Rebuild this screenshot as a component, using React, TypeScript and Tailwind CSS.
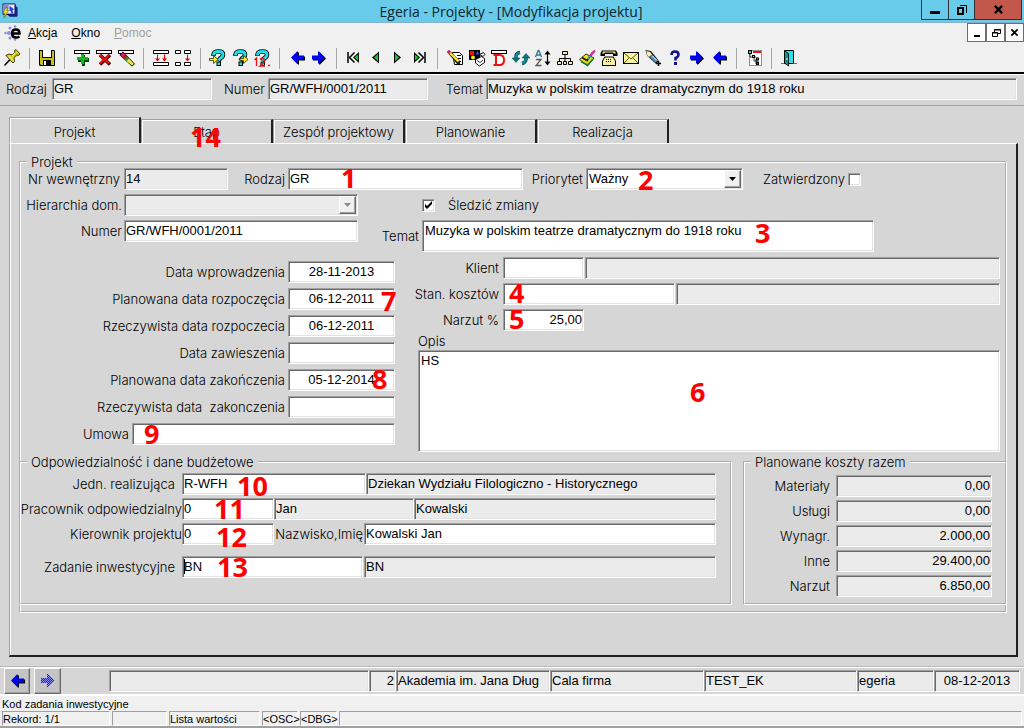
import React from "react";
import clsx from "clsx";

const sunken =
  "border border-t-[#a0a0a0] border-l-[#a0a0a0] border-b-white border-r-white shadow-[inset_1px_1px_0_#696969,inset_-1px_-1px_0_#e3e3e3]";
const raised =
  "border border-t-white border-l-white border-b-[#696969] border-r-[#696969] shadow-[inset_-1px_-1px_0_#a0a0a0]";

function Mark({ n, at }: { n: number; at: string }) {
  return (
    <span
      className={clsx(
        "pointer-events-none absolute z-10 font-['Open_Sans','Noto_Sans',sans-serif] text-[27px] leading-[20px] font-bold text-[#ff0000]",
        at,
      )}
    >
      {n}
    </span>
  );
}

type FieldProps = {
  id: string;
  label?: string;
  value?: string;
  w: string;
  ro?: boolean;
  align?: "left" | "center" | "right";
  mark?: React.ReactNode;
};

function Field({ id, label, value = "", w, ro, align = "left", mark }: FieldProps) {
  return (
    <div className={clsx("relative h-[22px]", w)}>
      <input
        id={id}
        aria-label={label}
        defaultValue={value}
        readOnly={ro}
        className={clsx(
          "block h-full w-full px-px pb-[2px] outline-none",
          sunken,
          ro ? "bg-[#ebebeb]" : "bg-white",
          align === "center" && "text-center",
          align === "right" && "text-right",
        )}
      />
      {mark}
    </div>
  );
}

function Label({ htmlFor, className, children }: { htmlFor: string; className?: string; children: React.ReactNode }) {
  return (
    <label htmlFor={htmlFor} className={clsx("shrink-0 font-['Inter',sans-serif] font-light whitespace-pre", className)}>
      {children}
    </label>
  );
}

function Check({ id, checked }: { id: string; checked?: boolean }) {
  return (
    <span className="relative flex size-[13px] shrink-0">
      <input
        id={id}
        type="checkbox"
        defaultChecked={checked}
        className={clsx("peer size-[13px] appearance-none bg-white", sunken)}
      />
      <svg viewBox="0 0 13 13" className="pointer-events-none absolute inset-0 hidden size-[13px] peer-checked:block">
        <path d="M3 5v3l2 2 5-5V2L5 7z" fill="#000" />
      </svg>
    </span>
  );
}

function Dropdown({ id, value, w, disabled, mark }: { id: string; value: string; w: string; disabled?: boolean; mark?: React.ReactNode }) {
  return (
    <div className={clsx("relative h-[22px]", w)}>
      <select
        id={id}
        disabled={disabled}
        defaultValue={value}
        className={clsx(
          "block h-full w-full appearance-none pr-5 pl-[2px] text-black outline-none",
          sunken,
          disabled ? "bg-[#ebebeb]" : "bg-white",
        )}
      >
        <option value={value}>{value}</option>
      </select>
      <span
        className={clsx(
          "pointer-events-none absolute top-[2px] right-[2px] flex h-[18px] w-[17px] items-center justify-center bg-[#f0f0f0]",
          raised,
        )}
      >
        <svg viewBox="0 0 7 4" className={clsx("h-[4px] w-[7px]", disabled ? "text-[#8c8c8c]" : "text-black")}>
          <path d="M0 0h7L3.500 4z" fill="currentColor" />
        </svg>
      </span>
      {mark}
    </div>
  );
}

function Group({ title, className, children }: { title: string; className?: string; children: React.ReactNode }) {
  return (
    <fieldset className={clsx("min-w-0 border-2 border-white pl-px [border-style:groove]", className)}>
      <legend className="ml-[5px] px-1 font-['Inter',sans-serif] leading-[12px] font-light">{title}</legend>
      {children}
    </fieldset>
  );
}

/* ---------- toolbar drawings, 18 x 18 grid ---------- */

const bar = <rect x="1.500" y="1.500" width="15" height="3" fill="#fff" stroke="#000" />;

const arrowRight = (
  <>
    <path d="M3 7.500h6V3.500h1l6 6-6 6H9v-4H3z" fill="#000" />
    <path d="M2 6.500h6V2.500h1l6 6-6 6H8v-4H2z" fill="#0000f0" />
  </>
);
const arrowLeft = (
  <>
    <path d="M17 7.500h-6V3.500h-1l-6 6 6 6h1v-4h6z" fill="#000" />
    <path d="M16 6.500h-6V2.500H9l-6 6 6 6h1v-4h6z" fill="#0000f0" />
  </>
);

const question = (
  <>
    <path d="M4.500 7V5.500Q5 2.500 9.500 2.500t4.500 3Q14 8 11 9.500L9.500 12" fill="none" stroke="#000" strokeWidth="4.500" />
    <rect x="7.500" y="12.500" width="4.500" height="4.500" fill="#000" />
    <path d="M4.500 6.500V5.500Q5 2.500 9.500 2.500t4.500 3Q14 8 11 9.500L9.500 11.500" fill="none" stroke="#20e0e8" strokeWidth="2.800" />
    <rect x="8.500" y="13.500" width="2.500" height="2.500" fill="#20e0e8" />
  </>
);

const drawings: Record<string, React.ReactNode> = {
  Przypnij: (
    <>
      <path d="M1.500 16.500 7 10.500" stroke="#000" strokeWidth="1.500" />
      <path d="M3 6.500 6 5l3 1 3-2.500-.5-2L13 .5 17 5l-1.500 1.500-2-.5L11 9l.5 3.500L10 14z" fill="#e0d820" stroke="#3c3c00" />
      <path d="M6 7.500l4.500 4.500M9 7l3-3" stroke="#fff8a0" />
      <path d="M11 8.500l4-3.500" stroke="#8c8800" strokeWidth="1.500" />
    </>
  ),
  Zapisz: (
    <>
      <path d="M1 1h15l1 1v15H2l-1-1z" fill="#000" />
      <path d="M2 2h14v14H3l-1-1z" fill="#c8c020" />
      <rect x="4" y="1" width="10" height="8" fill="#000" />
      <rect x="5" y="1" width="8" height="7" fill="#fff" />
      <rect x="5" y="11" width="8" height="6" fill="#000" />
      <rect x="6" y="12" width="2" height="4" fill="#f0f0f0" />
    </>
  ),
  Dodaj: (
    <>
      {bar}
      <path d="M9 6h3v3h4v4h-4v4H9v-4H5V9h4z" fill="#004800" />
      <path d="M8 5h3v3h4v3h-4v4H8v-4H4V8h4z" fill="#10b820" />
    </>
  ),
  "Usuń": (
    <>
      {bar}
      <path d="M5 6l10 9.500M15 6L5 15.500" stroke="#500000" strokeWidth="3.500" />
      <path d="M5 6l9 8.500M14 6l-9 8.500" stroke="#e01010" strokeWidth="2" />
    </>
  ),
  "Wyczyść": (
    <>
      {bar}
      <path d="M6 2.500L18 15l-3 2.500L2.500 6z" fill="#000" />
      <path d="M6 3.500L8.500 6 6 8.500 3.500 6z" fill="#f01080" />
      <path d="M8.500 6l1.500 1.500-2.500 2.500L6 8.500z" fill="#e01010" />
      <path d="M10 7.500l2 2L9.500 12l-2-2z" fill="#18a020" />
      <path d="M12 9.500l5 5.500-2 1.500-5.500-4.500z" fill="#f0e840" />
    </>
  ),
  "Wstaw rekord": (
    <>
      <path d="M1.500 4.500v-3h15v3zM1.500 16.500v-3h15v3z" fill="#fff" stroke="#000" />
      <path d="M5 5.500v4H3l2.500 3L8 9.500H6v-4zM12 5.500v4h-2l2.500 3 2.500-3h-2v-4z" fill="#e00000" />
    </>
  ),
  "Powiel rekord": (
    <>
      <path d="M1.500 1.500h5v3h-5zM10.500 1.500h6v3h-6zM1.500 13.500h5v3h-5zM10.500 13.500h6v3h-6z" fill="#fff" stroke="#000" />
      <path d="M13 5.500v4h-2l2.500 3 2.500-3h-2v-4z" fill="#e00000" />
    </>
  ),
  "Wprowadź zapytanie": (
    <>
      {question}
      <path d="M.5 9.500h4v-3l4.500 4-4.500 4v-3h-4z" fill="#f8f020" stroke="#302c00" strokeWidth=".8" />
    </>
  ),
  "Wykonaj zapytanie": (
    <>
      {question}
      <path d="M9 9.500h3.500v-3l4.500 4-4.500 4v-3H9z" fill="#f8f020" stroke="#302c00" strokeWidth=".8" />
    </>
  ),
  "Policz rekordy": (
    <>
      {question}
      <path d="M1.500 11l2-2v8M7 10.500q2-2.500 4 0t-4 6.500h5M15 16.500h2" stroke="#f01010" strokeWidth="1.300" fill="none" />
    </>
  ),
  "Poprzedni blok": arrowLeft,
  "Następny blok": arrowRight,
  Pierwszy: (
    <>
      <path d="M3 3v11" stroke="#000" strokeWidth="1.500" />
      <path d="M9.500 3.500L4.500 8.500l5 5" stroke="#000" fill="none" strokeWidth="1.500" />
      <path d="M14 3v11L8 8.500z" fill="#000" />
      <path d="M13 5.500v6L9.500 8.500z" fill="#10d020" />
    </>
  ),
  Poprzedni: (
    <>
      <path d="M12 2.500v12L5 8.500z" fill="#000" />
      <path d="M11 5v7L7 8.500z" fill="#10d020" />
    </>
  ),
  "Następny": (
    <>
      <path d="M5 2.500v12l7-6z" fill="#000" />
      <path d="M6 5v7l4-3.500z" fill="#10d020" />
    </>
  ),
  Ostatni: (
    <>
      <path d="M14 3v11" stroke="#000" strokeWidth="1.500" />
      <path d="M7.500 3.500l5 5-5 5" stroke="#000" fill="none" strokeWidth="1.500" />
      <path d="M3 3v11l6-5.500z" fill="#000" />
      <path d="M4 5.500v6l3.500-3z" fill="#10d020" />
    </>
  ),
  Edytuj: (
    <>
      <path d="M6.500 3.500h7l3 3v9h-8z" fill="#fff" stroke="#000" />
      <path d="M11 6.500h4M12 9.500h3M13 12.500h2" stroke="#000" />
      <path d="M1 3l2-2 11 11v3h-3z" fill="#202020" />
      <path d="M3.500 3.500L12.500 12.500" stroke="#f8e830" strokeWidth="2.200" />
      <path d="M1.500 2L4 4.500" stroke="#f02080" strokeWidth="2" />
    </>
  ),
  Obiekty: (
    <>
      <rect x="1" y="1" width="11" height="10" fill="#000" />
      <rect x="2" y="2" width="4" height="4" fill="#f01010" />
      <path d="M7.500 5.500l2-3.500 2 3.500z" fill="#3050ff" />
      <circle cx="5" cy="8.500" r="2" fill="#f0e020" />
      <path d="M11.500 5.500l4-2 1.500 2-2 2zM7.500 10.500l6-3 3 2v4l-5 3.500-4-3z" fill="#fff" stroke="#000" />
      <path d="M9 11.500l3 2 3-2.500" stroke="#000" fill="none" strokeWidth=".8" />
    </>
  ),
  Dokument: (
    <>
      <rect x="1.500" y="1.500" width="15" height="3" fill="#fff" stroke="#000" />
      <path d="M6 6h3.500Q14 6 14 11t-4.500 5H6zM3.500 6H7M3.500 16H7" fill="#fff" stroke="#f01010" strokeWidth="2" />
    </>
  ),
  "Odśwież": (
    <>
      <path d="M4 9Q3.500 4 8 3.500M14 8.500q.5 5-4 6" fill="none" stroke="#003c48" strokeWidth="3.500" />
      <path d="M4 9Q4 4 8 3.500M14 8.500q0 5-4 6" fill="none" stroke="#109098" strokeWidth="2.200" />
      <path d="M0 9h8l-4 4.500zM18 9h-8l4-4.500z" fill="#087880" stroke="#003c48" strokeWidth=".5" />
    </>
  ),
  Sortuj: (
    <>
      <path d="M1.500 8l2.700-6.500h.6L7.500 8M2.500 6h4" fill="none" stroke="#287890" strokeWidth="1.300" />
      <path d="M2 10.500h5l-5 6h5.500" fill="none" stroke="#605848" strokeWidth="1.300" />
      <path d="M13.500 3v11.500" stroke="#000" strokeWidth="1.200" />
      <path d="M10.500 5.500l3-4 3 4zM10.500 12.500l3 4 3-4z" fill="#000" />
    </>
  ),
  Struktura: (
    <>
      <path d="M9 6v6M3.500 12V9.500h11V12" fill="none" stroke="#000" />
      <path d="M6.500 2.500h5v3h-5zM1.500 12.500h4v3h-4zM7.500 12.500h3v3h-3zM12.500 12.500h4v3h-4z" fill="#f4f0b0" stroke="#000" />
    </>
  ),
  "Zatwierdź": (
    <>
      <path d="M1.500 10.500L8 5l8 4-6.500 8z" fill="#f0e020" stroke="#000" strokeWidth=".8" />
      <path d="M3 12.500l6.500 3.500L15 10" fill="none" stroke="#108020" strokeWidth="1.600" />
      <path d="M4 8.500l5 3 6-8.500" fill="none" stroke="#202020" strokeWidth="1.800" />
      <path d="M12.500 6.500L17 1.500" stroke="#e020a0" strokeWidth="2" />
      <path d="M9.500 10l3-3.500" stroke="#20b0d0" strokeWidth="1.500" />
    </>
  ),
  Telefon: (
    <>
      <path d="M2 1.500h14l1.500 2.500v3H13V5H5v2H.5V4zM4.500 7.500h9L16 12v5H2v-5z" fill="#000" />
      <path d="M3 2.500h12l1 2h-2l-1-1H5l-1 1H2zM5 8.500h8l2 3.500v4H3v-4z" fill="#f8f0a0" />
      <path d="M6 10.500h6M6 12.500h6" stroke="#000" strokeDasharray="1 1" />
    </>
  ),
  Poczta: (
    <>
      <rect x="1.500" y="3.500" width="15" height="11" fill="#f8f4a0" stroke="#000" />
      <path d="M2 4l7 6 7-6M2 14l5-5M16 14l-5-5" fill="none" stroke="#504800" strokeWidth=".9" />
    </>
  ),
  Latarka: (
    <>
      <path d="M1.500 1l5.500 1 8 10-3 3-9-8.500z" fill="#202020" />
      <path d="M2.500 2L6 3l2 2.500L5 8 3 6z" fill="#f8f0b0" />
      <path d="M7 7l5.500 5.500" stroke="#4890d0" strokeWidth="3" />
      <path d="M8 6.500l5 5" stroke="#fff" />
      <path d="M14.500 12v5M12 14.500h5" stroke="#000" strokeWidth="1.500" />
    </>
  ),
  "Pomoc programu": (
    <>
      <path d="M5.500 6Q5.500 2.500 9 2.500t3.500 3Q12.500 8 9.500 9v2.500" fill="none" stroke="#101090" strokeWidth="2.500" />
      <rect x="8" y="13" width="3" height="3" fill="#101090" />
    </>
  ),
  Dalej: arrowRight,
  Wstecz: arrowLeft,
  Drzewo: (
    <>
      <rect x="4.500" y="1.500" width="12" height="15" fill="#fff" stroke="#909090" />
      <rect x="8" y="2" width="8" height="2" fill="#f01010" />
      <path d="M5 5v3h4v4h4v3M9 8h2M11 10v5h2" fill="none" stroke="#000" strokeWidth=".8" />
      <path d="M3 1h4v4H3z" fill="#000" />
      <path d="M4 2h2v2H4z" fill="#40d080" />
      <path d="M7 6h3v3H7zM11 8.500h3v3h-3zM11 13h3v3h-3z" fill="#000" />
      <path d="M8 7h1v1H8z" fill="#f0e020" />
      <path d="M12 9.500h1v1h-1z" fill="#40d080" />
      <path d="M12 14h1v1h-1z" fill="#f01010" />
    </>
  ),
  "Wyjście": (
    <>
      <path d="M1 14.500h4M14 14.500h3" stroke="#707070" />
      <path d="M4.500 1.500h9v13h-9z" fill="#30e0e8" stroke="#000" />
      <path d="M4.500 1.500l4 3v12.500l-4-3z" fill="#109090" stroke="#000" strokeWidth=".8" />
      <path d="M7 9v2" stroke="#fff" />
    </>
  ),
};

const toolGroups: string[][] = [
  ["Przypnij"],
  ["Zapisz"],
  ["Dodaj", "Usuń", "Wyczyść"],
  ["Wstaw rekord", "Powiel rekord"],
  ["Wprowadź zapytanie", "Wykonaj zapytanie", "Policz rekordy"],
  ["Poprzedni blok", "Następny blok"],
  ["Pierwszy", "Poprzedni", "Następny", "Ostatni"],
  [
    "Edytuj", "Obiekty", "Dokument", "Odśwież", "Sortuj", "Struktura", "Zatwierdź",
    "Telefon", "Poczta", "Latarka", "Pomoc programu", "Dalej", "Wstecz",
  ],
  ["Drzewo"],
  ["Wyjście"],
];

function TitleBar() {
  return (
    <header className="flex h-[23px] items-start border-b border-[#7fb4cc] bg-[#68cbea] pr-[2px] pl-[2px]">
      <svg viewBox="0 0 17 17" className="mt-[3px] size-[16px] shrink-0">
        <path d="M1 1h13v11H1z" fill="#e8e8f8" stroke="#101060" />
        <path d="M14 3l2 2v9H8l-2-2h8z" fill="#2030a0" stroke="#101060" />
        <path d="M2 2h5v5H2z" fill="#7890d8" />
        <path d="M8 3l5 4-2 .5 1 3-2 .5-1-3-1 1z" fill="#2040e0" />
        <path d="M4 5l2 0-1 3h2l-5 8 1-5H1z" fill="#f0e020" stroke="#504000" strokeWidth=".5" />
      </svg>
      <h1 className="min-w-0 flex-1 pl-[83px] text-center font-['Open_Sans','Noto_Sans',sans-serif] text-[14px] leading-[23px] text-[#10242c]">
        Egeria - Projekty - [Modyfikacja projektu]
      </h1>
      <div className="flex h-[20px] shrink-0 border border-t-0 border-[#303030]">
        <button aria-label="Minimalizuj" className="flex w-[27px] items-center justify-center border-r border-[#303030]">
          <svg viewBox="0 0 10 10" className="size-[10px]"><path d="M0 6h10v3H0z" /></svg>
        </button>
        <button aria-label="Przywróć" className="flex w-[26px] items-center justify-center border-r border-[#303030]">
          <svg viewBox="0 0 10 10" className="size-[10px]" fill="none" stroke="#000">
            <path d="M1 3h5v6H1z" strokeWidth="2" />
            <path d="M3 .5h6.500V8" />
          </svg>
        </button>
        <button aria-label="Zamknij" className="flex w-[46px] items-center justify-center bg-[#c2574c]">
          <svg viewBox="0 0 10 10" className="size-[9px]"><path d="M1 1l8 8M9 1L1 9" stroke="#000" strokeWidth="2.500" /></svg>
        </button>
      </div>
    </header>
  );
}

const mdiButton = "flex size-[19px] items-center justify-center border border-[#6e6e6e] bg-white";

function MenuBar() {
  return (
    <nav className="flex h-[19px] items-center bg-[#f0f0f0] pl-[4px] text-[12px]">
      <svg viewBox="0 0 18 16" className="mr-[6px] h-[16px] w-[18px] shrink-0">
        <g fill="#8890d8">
          <circle cx="1.500" cy="8" r="1.300" />
          <circle cx="5" cy="8" r="2" />
          <circle cx="6" cy="3" r="1.500" />
          <circle cx="6" cy="13" r="1.500" />
          <circle cx="11" cy="1.500" r="1.300" />
          <circle cx="11" cy="14.500" r="1.300" />
        </g>
        <path d="M8.500 8.500h7q0-4-3.700-4t-3.700 4 4 4q2 0 3.200-1.200" fill="none" stroke="#000" strokeWidth="2.500" />
      </svg>
      <a href="#akcja"><u>A</u>kcja</a>
      <a href="#okno" className="ml-[14px]"><u>O</u>kno</a>
      <a href="#pomoc" className="ml-[14px] text-[#a0a0a0]"><u>P</u>omoc</a>
      <div className="ml-auto flex">
        <button aria-label="Minimalizuj dokument" className={mdiButton}>
          <svg viewBox="0 0 10 10" className="size-[10px]"><path d="M2 7h6v2H2z" /></svg>
        </button>
        <button aria-label="Przywróć dokument" className={mdiButton}>
          <svg viewBox="0 0 10 10" className="size-[10px]" fill="none" stroke="#000">
            <path d="M3.500 4V1.500h6v4H7M3 2h7M1.500 4.500h5v4h-5zM1 5h6" />
          </svg>
        </button>
        <button aria-label="Zamknij dokument" className={mdiButton}>
          <svg viewBox="0 0 10 10" className="size-[9px]"><path d="M1.500 1.500l7 7M8.500 1.500l-7 7" stroke="#000" strokeWidth="2" /></svg>
        </button>
      </div>
    </nav>
  );
}

function Toolbar() {
  return (
    <div role="toolbar" className="flex h-[32px] items-center border-b-2 border-black bg-[#f0f0f0] pt-[2px] pl-px">
      {toolGroups.map((group, i) => (
        <React.Fragment key={i}>
          {i > 0 && <span className="mx-[6px] h-[21px] w-px bg-[#a8a8a8]" />}
          {group.map((name) => (
            <button key={name} aria-label={name} className="flex h-[24px] w-[22px] shrink-0 items-center justify-center">
              <svg viewBox="0 0 18 18" className="size-[18px]">
                {drawings[name]}
              </svg>
            </button>
          ))}
        </React.Fragment>
      ))}
    </div>
  );
}

const tabs = ["Projekt", "Etap", "Zespół projektowy", "Planowanie", "Realizacja"];

function Tabs() {
  return (
    <div role="tablist" className="flex h-[25px] items-end font-['Inter',sans-serif] font-light">
      {tabs.map((name, i) => (
        <button
          key={name}
          role="tab"
          aria-selected={i === 0}
          className={clsx(
            "relative w-[132px] border-t border-r-2 border-l border-t-[#a0a0a0] border-r-[#202020] border-l-[#a0a0a0] shadow-[inset_1px_1px_0_#fff]",
            i === 0 ? "h-[26px] pt-[2px]" : "h-[24px]",
          )}
        >
          {name}
          {i === 1 && <Mark n={14} at="top-[7px] left-[48px]" />}
        </button>
      ))}
    </div>
  );
}

const dates: [string, string, string, React.ReactNode?][] = [
  ["d1", "Data wprowadzenia", "28-11-2013"],
  ["d2", "Planowana data rozpoczęcia", "06-12-2011", <Mark n={7} at="top-[3px] left-[93px]" />],
  ["d3", "Rzeczywista data rozpoczecia", "06-12-2011"],
  ["d4", "Data zawieszenia", ""],
  ["d5", "Planowana data zakończenia", "05-12-2014", <Mark n={8} at="top-0 left-[84px]" />],
  ["d6", "Rzeczywista data  zakonczenia", ""],
];

const costs: [string, string, string][] = [
  ["k1", "Materiały", "0,00"],
  ["k2", "Usługi", "0,00"],
  ["k3", "Wynagr.", "2.000,00"],
  ["k4", "Inne", "29.400,00"],
  ["k5", "Narzut", "6.850,00"],
];

function ProjectForm() {
  return (
    <Group title="Projekt">
      <div className="flex flex-col gap-1">
        <div className="flex items-center">
          <Label htmlFor="nr" className="w-[102px] pr-[4px] text-right">Nr wewnętrzny</Label>
          <Field id="nr" value="14" w="w-[104px]" ro />
          <Label htmlFor="rodzaj" className="w-[60px] pr-[3px] text-right">Rodzaj</Label>
          <Field id="rodzaj" value="GR" w="w-[235px]" mark={<Mark n={1} at="top-0 left-[53px]" />} />
          <Label htmlFor="priorytet" className="w-[63px] pr-[3px] text-right">Priorytet</Label>
          <Dropdown id="priorytet" value="Ważny" w="w-[157px]" mark={<Mark n={2} at="top-[2px] left-[52px]" />} />
          <Label htmlFor="zatw" className="w-[105px] pr-[3px] text-right">Zatwierdzony</Label>
          <Check id="zatw" />
        </div>
        <div className="flex items-center">
          <Label htmlFor="hier" className="w-[102px] pr-[2px] text-right">Hierarchia dom.</Label>
          <Dropdown id="hier" value="" w="w-[234px]" disabled />
          <span className="w-[64px]" />
          <Check id="sledz" checked />
          <Label htmlFor="sledz" className="pl-[13px]">Śledzić zmiany</Label>
        </div>
        <div className="flex items-start">
          <Label htmlFor="numer" className="w-[102px] pr-[2px] text-right leading-[22px]">Numer</Label>
          <Field id="numer" value="GR/WFH/0001/2011" w="w-[234px]" />
          <Label htmlFor="temat" className="w-[64px] pr-[3px] text-right leading-[32px]">Temat</Label>
          <div className="relative h-[32px] w-[452px]">
            <textarea
              id="temat"
              defaultValue="Muzyka w polskim teatrze dramatycznym do 1918 roku"
              className={clsx("block h-full w-full resize-none overflow-hidden bg-white px-[2px] pt-[2px] outline-none", sunken)}
            />
            <Mark n={3} at="top-[3px] left-[333px]" />
          </div>
        </div>
      </div>

      <div className="flex">
        <div className="flex w-[373px] shrink-0 flex-col gap-[5px] pt-[9px]">
          {dates.map(([id, name, value, mark]) => (
            <div key={id} className="flex items-center justify-end">
              <Label htmlFor={id} className="pr-[3px]">{name}</Label>
              <Field id={id} value={value} w="w-[107px]" align="center" mark={mark} />
            </div>
          ))}
          <div className="flex items-center justify-end">
            <Label htmlFor="umowa" className="pr-[3px]">Umowa</Label>
            <Field id="umowa" w="w-[263px]" mark={<Mark n={9} at="top-px left-[12px]" />} />
          </div>
        </div>

        <div className="flex min-w-0 flex-1 flex-col pt-[5px] pr-[5px]">
          <div className="flex flex-col gap-1">
            <div className="flex items-center">
              <Label htmlFor="klient" className="w-[108px] pr-[4px] text-right">Klient</Label>
              <Field id="klient" w="w-[81px]" />
              <Field id="klient2" label="Nazwa klienta" w="ml-px flex-1" ro />
            </div>
            <div className="flex items-center">
              <Label htmlFor="stan" className="w-[108px] pr-[4px] text-right">Stan. kosztów</Label>
              <Field id="stan" w="w-[172px]" mark={<Mark n={4} at="top-0 left-[6px]" />} />
              <Field id="stan2" label="Nazwa stanowiska" w="ml-px flex-1" ro />
            </div>
            <div className="flex items-center">
              <Label htmlFor="narzut" className="w-[108px] pr-[4px] text-right">Narzut %</Label>
              <Field id="narzut" value="25,00" w="w-[81px]" align="right" mark={<Mark n={5} at="top-0 left-[6px]" />} />
            </div>
          </div>
          <Label htmlFor="opis" className="ml-[23px] pt-[2px] leading-[17px]">Opis</Label>
          <div className="relative ml-[23px] h-[102px]">
            <textarea
              id="opis"
              defaultValue="HS"
              className={clsx("block h-full w-full resize-none bg-white px-[2px] pt-[2px] outline-none", sunken)}
            />
            <Mark n={6} at="top-[32px] left-[272px]" />
          </div>
        </div>
      </div>

      <div className="-mr-[2px] mt-1 mb-[6px] -ml-[3px] flex gap-[11px]">
        <Group title="Odpowiedzialność i dane budżetowe" className="flex-1 pr-[14px] pb-[25px]">
          <div className="flex flex-col gap-[3px] pt-[5px]">
            <div className="flex items-center">
              <Label htmlFor="jedn" className="w-[160px] pr-[7px] text-right">Jedn. realizująca</Label>
              <Field id="jedn" value="R-WFH" w="w-[184px]" mark={<Mark n={10} at="top-[3px] left-[55px]" />} />
              <Field id="jedn2" label="Nazwa jednostki" value="Dziekan Wydziału Filologiczno - Historycznego" w="flex-1" ro />
            </div>
            <div className="flex items-center">
              <Label htmlFor="prac" className="flex w-[160px] justify-end">Pracownik odpowiedzialny</Label>
              <Field id="prac" value="0" w="w-[92px]" mark={<Mark n={11} at="top-px left-[32px]" />} />
              <Field id="prac2" label="Imię pracownika" value="Jan" w="w-[140px]" ro />
              <Field id="prac3" label="Nazwisko pracownika" value="Kowalski" w="flex-1" ro />
            </div>
            <div className="flex items-center">
              <Label htmlFor="kier" className="w-[160px] text-right">Kierownik projektu</Label>
              <Field id="kier" value="0" w="w-[92px]" mark={<Mark n={12} at="top-[4px] left-[34px]" />} />
              <Label htmlFor="kier2" className="flex w-[90px] justify-end pr-px">Nazwisko,Imię</Label>
              <Field id="kier2" value="Kowalski Jan" w="flex-1" />
            </div>
            <div className="mt-[8px] flex items-center">
              <Label htmlFor="zad" className="w-[160px] pr-[7px] text-right">Zadanie inwestycyjne</Label>
              <Field
                id="zad"
                value="BN"
                w="w-[181px]"
                mark={
                  <>
                    <span className="absolute top-[3px] left-[2px] h-[15px] w-px bg-black" />
                    <Mark n={13} at="top-px left-[35px]" />
                  </>
                }
              />
              <Field id="zad2" label="Nazwa zadania" value="BN" w="ml-px flex-1" ro />
            </div>
          </div>
        </Group>
        <Group title="Planowane koszty razem" className="w-[264px] shrink-0">
          <div className="flex flex-col gap-[3px] pt-[7px] pr-[13px]">
            {costs.map(([id, name, value]) => (
              <div key={id} className="flex items-center justify-end">
                <Label htmlFor={id} className="pr-[6px]">{name}</Label>
                <Field id={id} value={value} w="w-[156px]" align="right" ro />
              </div>
            ))}
          </div>
        </Group>
      </div>
    </Group>
  );
}

function RecordBar() {
  return (
    <div className="flex items-center border-t border-white bg-[#d6d6d6] pr-1 pl-[4px] shadow-[0_-1px_0_#b8b8b8]">
      <button aria-label="Poprzedni rekord" className={clsx("flex h-[26px] w-[26px] items-center justify-center bg-[#c4c4c4]", raised)}>
        <svg viewBox="0 0 18 18" className="size-[18px]">{arrowLeft}</svg>
      </button>
      <button aria-label="Następny rekord" className={clsx("ml-[4px] flex h-[26px] w-[27px] items-center justify-center bg-[#c4c4c4]", raised)}>
        <svg viewBox="0 0 18 18" className="size-[18px]">
          <defs>
            <pattern id="dots" width="2" height="2" patternUnits="userSpaceOnUse">
              <rect width="2" height="2" fill="#9090f0" />
              <path d="M0 0h1v1H0zM1 1h1v1H1z" fill="#1818f0" />
            </pattern>
          </defs>
          <path d="M2 6h6V2h1l6.500 6.500L9 15H8v-4H2z" fill="url(#dots)" />
        </svg>
      </button>
      <div className="ml-[48px] flex min-w-0 flex-1">
        <Field id="s1" label="Komunikat" w="flex-1" ro />
        <Field id="s2" label="Numer firmy" value="2" w="w-[27px]" align="right" ro />
        <Field id="s3" label="Firma" value="Akademia im. Jana Dług" w="w-[154px]" ro />
        <Field id="s4" label="Zakres" value="Cala firma" w="w-[154px]" ro />
        <Field id="s5" label="Baza" value="TEST_EK" w="w-[153px]" ro />
        <Field id="s6" label="Użytkownik" value="egeria" w="w-[77px]" ro />
        <Field id="s7" label="Data" value="08-12-2013" w="w-[86px]" align="center" ro />
      </div>
    </div>
  );
}

const cell = "h-[15px] border border-t-[#a0a0a0] border-l-[#a0a0a0] border-r-white border-b-white whitespace-nowrap";

function StatusBar() {
  return (
    <footer className="border-t-2 border-b-2 border-t-white border-b-[#a0a0a0] bg-[#f0f0f0] px-[2px] text-[11px] leading-[14px]">
      <p className="h-[15px] pt-px">Kod zadania inwestycyjne</p>
      <div className="flex gap-[2px]">
        <span className={clsx(cell, "w-[108px]")}>Rekord: 1/1</span>
        <span className={clsx(cell, "w-[55px]")} />
        <span className={clsx(cell, "w-[91px]")}>Lista wartości</span>
        <span className={clsx(cell, "w-[36px]")}>&lt;OSC&gt;</span>
        <span className={clsx(cell, "w-[37px]")}>&lt;DBG&gt;</span>
        <span className={clsx(cell, "flex-1")} />
      </div>
    </footer>
  );
}

export default function App() {
  return (
    <div className="flex min-h-screen flex-col bg-[#d6d6d6] font-['Liberation_Sans',Arial,sans-serif] text-[13px] leading-[16px] text-black">
      <TitleBar />
      <MenuBar />
      <Toolbar />
      <div className="flex items-center border-t border-b border-t-white border-b-[#a0a0a0] pt-[3px] pr-[7px] pb-[5px] pl-[6px]">
        <Label htmlFor="h1" className="w-[46px]">Rodzaj</Label>
        <Field id="h1" value="GR" w="w-[160px]" ro />
        <Label htmlFor="h2" className="w-[56px] pr-[3px] text-right">Numer</Label>
        <Field id="h2" value="GR/WFH/0001/2011" w="w-[160px]" ro />
        <Label htmlFor="h3" className="w-[58px] pr-[3px] text-right">Temat</Label>
        <Field id="h3" value="Muzyka w polskim teatrze dramatycznym do 1918 roku" w="flex-1" ro />
      </div>
      <main className="flex flex-1 flex-col pt-[12px] pr-[6px] pb-[10px] pl-[9px]">
        <Tabs />
        <div className="flex flex-1">
          <div className="flex-1 border-t border-r-2 border-b-2 border-l border-t-white border-r-[#202020] border-b-[#202020] border-l-[#a0a0a0] pt-[12px] pr-[9px] pl-[9px] shadow-[inset_1px_0_0_#fff]">
            <ProjectForm />
          </div>
        </div>
      </main>
      <RecordBar />
      <StatusBar />
    </div>
  );
}
